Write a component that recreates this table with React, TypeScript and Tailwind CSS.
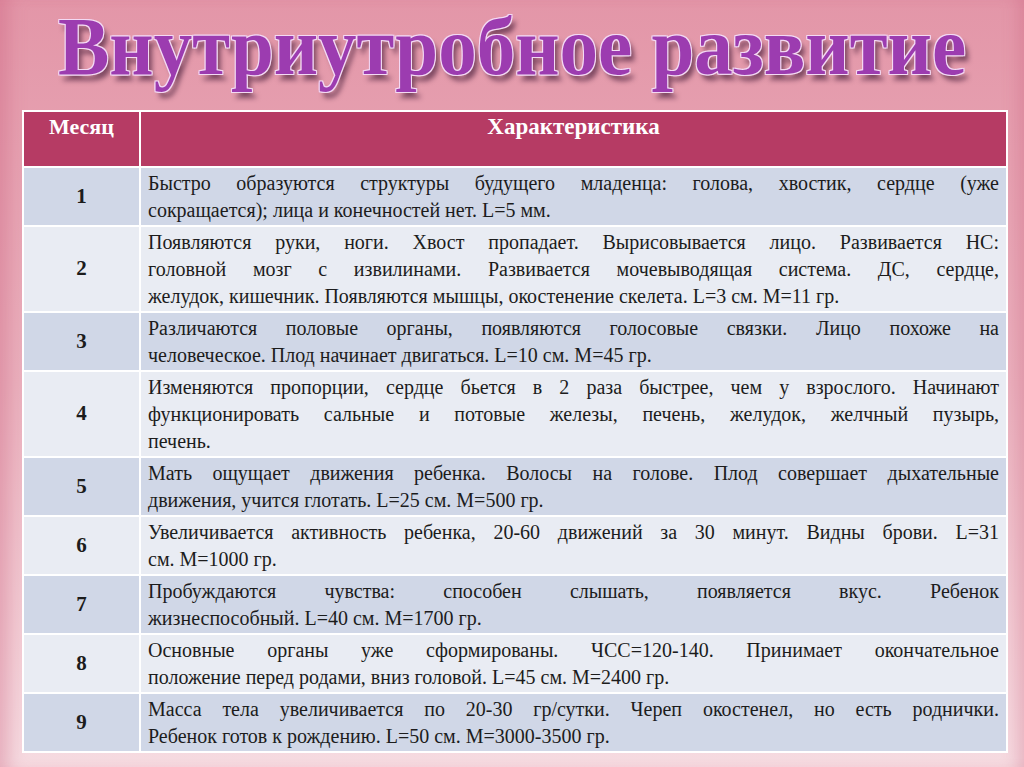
import React from "react";

type Row = { n: number; lines: string[] };

const rows: Row[] = [
  {
    n: 1,
    lines: [
      "Быстро образуются структуры будущего младенца: голова, хвостик, сердце (уже",
      "сокращается); лица и конечностей нет. L=5 мм.",
    ],
  },
  {
    n: 2,
    lines: [
      "Появляются руки, ноги. Хвост пропадает. Вырисовывается лицо. Развивается НС:",
      "головной мозг с извилинами. Развивается мочевыводящая система. ДС, сердце,",
      "желудок, кишечник. Появляются мышцы, окостенение скелета. L=3 см. M=11 гр.",
    ],
  },
  {
    n: 3,
    lines: [
      "Различаются половые органы, появляются голосовые связки. Лицо похоже на",
      "человеческое. Плод начинает двигаться. L=10 см. M=45 гр.",
    ],
  },
  {
    n: 4,
    lines: [
      "Изменяются пропорции, сердце бьется в 2 раза быстрее, чем у взрослого. Начинают",
      "функционировать сальные и потовые железы, печень, желудок, желчный пузырь,",
      "печень.",
    ],
  },
  {
    n: 5,
    lines: [
      "Мать ощущает движения ребенка. Волосы на голове. Плод совершает дыхательные",
      "движения, учится глотать. L=25 см. M=500 гр.",
    ],
  },
  {
    n: 6,
    lines: [
      "Увеличивается активность ребенка, 20-60 движений за 30 минут. Видны брови. L=31",
      "см. M=1000 гр.",
    ],
  },
  {
    n: 7,
    lines: [
      "Пробуждаются чувства: способен слышать, появляется вкус. Ребенок",
      "жизнеспособный. L=40 см. M=1700 гр.",
    ],
  },
  {
    n: 8,
    lines: [
      "Основные органы уже сформированы. ЧСС=120-140. Принимает окончательное",
      "положение перед родами, вниз головой. L=45 см. M=2400 гр.",
    ],
  },
  {
    n: 9,
    lines: [
      "Масса тела увеличивается по 20-30 гр/сутки. Череп окостенел, но есть роднички.",
      "Ребенок готов к рождению. L=50 см. M=3000-3500 гр.",
    ],
  },
];

export default function App() {
  return (
    <div className="w-[1024px] h-[767px] overflow-hidden bg-gradient-to-b from-[#e396a8] via-[#eab0bd] to-[#f6dbe1] shadow-[inset_20px_0_18px_-12px_rgba(200,90,120,0.35),inset_-16px_0_16px_-10px_rgba(200,90,120,0.3)] [font-family:Liberation_Serif,serif]">
      <div className="h-[110px] flex justify-center pt-[3px]">
        <h1 className="text-[77px] leading-[88px] font-bold text-[#9c3cb0] scale-y-[1.08] [text-shadow:0_0_1px_#fff,1px_1px_0_#f3d6f3,-1px_-1px_0_#f3d6f3,1px_-1px_0_#f3d6f3,-1px_1px_0_#f3d6f3,4px_5px_5px_rgba(60,20,50,0.6)]">
          Внутриутробное развитие
        </h1>
      </div>

      <div className="ml-[22px] w-[986px] bg-white p-[2px] flex flex-col gap-[2px] text-[#1c1c1c]">
        <div className="flex gap-[2px] h-[54px] bg-white">
          <div className="w-[115px] bg-[#b63b64] text-white font-bold text-[22px] leading-[28px] text-center pt-[1px]">
            Месяц
          </div>
          <div className="flex-1 bg-[#b63b64] text-white font-bold text-[23px] leading-[28px] text-center pt-[1px]">
            Характеристика
          </div>
        </div>
        {rows.map((r, i) => {
          const bg = i % 2 === 0 ? "bg-[#d0d7e7]" : "bg-[#e9ecf3]";
          return (
            <div key={r.n} className="flex gap-[2px]">
              <div
                className={`w-[115px] ${bg} flex items-center justify-center font-bold text-[21px]`}
              >
                {r.n}
              </div>
              <div className={`flex-1 ${bg} px-[7px] pt-[2px] pb-[1px] text-[20px] leading-[27px]`}>
                {r.lines.map((l, j) => (
                  <div
                    key={j}
                    className={
                      j < r.lines.length - 1
                        ? "whitespace-nowrap text-justify [text-align-last:justify]"
                        : "whitespace-nowrap"
                    }
                  >
                    {l}
                  </div>
                ))}
              </div>
            </div>
          );
        })}
      </div>
    </div>
  );
}
